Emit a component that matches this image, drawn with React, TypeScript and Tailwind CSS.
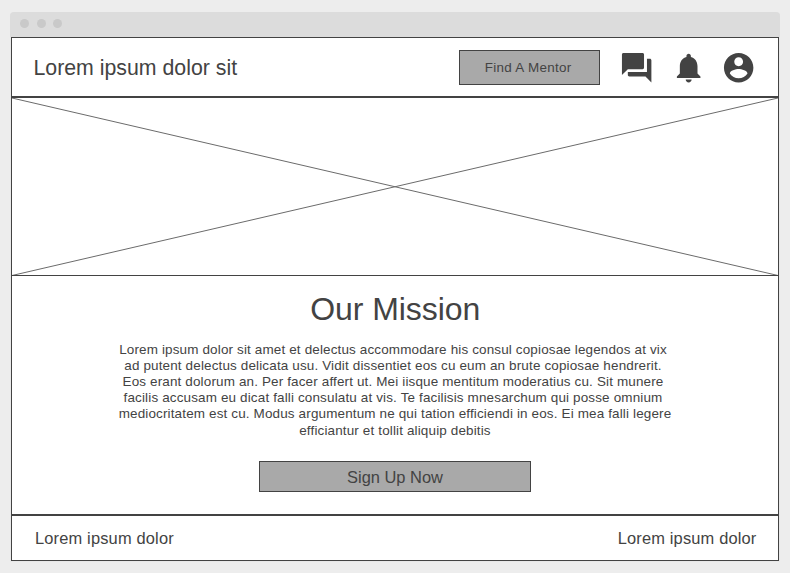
const ICON = "size-[35.330px] fill-[#434343] shrink-0";

function ChatIcon() {
  return (
    <svg className={ICON} viewBox="0 0 24 24">
      <path d="M21 6h-2v9H6v2c0 .55.45 1 1 1h11l4 4V7c0-.55-.45-1-1-1zm-4 6V3c0-.55-.45-1-1-1H3c-.55 0-1 .45-1 1v14l4-4h10c.55 0 1-.45 1-1z" />
    </svg>
  );
}

function BellIcon() {
  return (
    <svg className={ICON} viewBox="0 0 24 24">
      <path d="M12 22c1.100 0 2-.9 2-2h-4c0 1.100.89 2 2 2zm6-6v-5c0-3.070-1.640-5.640-4.500-6.320V4c0-.83-.67-1.500-1.500-1.500s-1.500.67-1.500 1.500v.68C7.630 5.360 6 7.920 6 11v5l-2 2v1h16v-1l-2-2z" />
    </svg>
  );
}

function AccountIcon() {
  return (
    <svg className={ICON} viewBox="0 0 24 24">
      <path d="M12 2C6.480 2 2 6.480 2 12s4.480 10 10 10 10-4.480 10-10S17.520 2 12 2zm0 3c1.660 0 3 1.340 3 3s-1.340 3-3 3-3-1.340-3-3 1.340-3 3-3zm0 14.200c-2.500 0-4.710-1.280-6-3.220.03-1.990 4-3.080 6-3.080 1.990 0 5.970 1.090 6 3.080-1.290 1.940-3.500 3.220-6 3.220z" />
    </svg>
  );
}

const mission = [
  "Lorem ipsum dolor sit amet et delectus accommodare his consul copiosae legendos at vix",
  "ad putent delectus delicata usu. Vidit dissentiet eos cu eum an brute copiosae hendrerit.",
  "Eos erant dolorum an. Per facer affert ut. Mei iisque mentitum moderatius cu. Sit munere",
  "facilis accusam eu dicat falli consulatu at vis. Te facilisis mnesarchum qui posse omnium",
  "mediocritatem est cu. Modus argumentum ne qui tation efficiendi in eos. Ei mea falli legere",
  "efficiantur et tollit aliquip debitis",
];

export default function App() {
  return (
    <div className="h-[573px] w-[790px] overflow-hidden bg-[#ededed] px-[10px] pt-[12px] font-['Liberation_Sans',Arial,sans-serif] text-[#434343]">
      <div className="h-[550px] rounded-t-[4px] bg-[#e8e8e8]">
        <div className="flex h-[25px] items-start gap-[7.500px] rounded-t-[4px] bg-[#dcdcdc] pl-[10px] pt-[7px]">
          <span className="size-[9px] rounded-full bg-[#c9c9c9]" />
          <span className="size-[9px] rounded-full bg-[#c9c9c9]" />
          <span className="size-[9px] rounded-full bg-[#c9c9c9]" />
        </div>
        <main className="mx-[1px] flex h-[524px] flex-col border border-[#434343] bg-white">
          <header className="flex h-[60px] shrink-0 items-center border-b-2 border-[#434343] pl-[21.500px] pr-[21.600px] pt-[1px]">
            <h1 className="pt-[1px] text-[21.300px] leading-[24px]">Lorem ipsum dolor sit</h1>
            <button className="ml-auto h-[35px] w-[141px] border border-[#434343] bg-[#a9a9a9] pr-[3px] pt-[1px] text-[13.450px] tracking-[0.300px]">
              Find A Mentor
            </button>
            <div className="ml-[19px] flex">
              <ChatIcon />
              <div className="ml-[16.700px] flex"><BellIcon /></div>
              <div className="ml-[14.600px] flex"><AccountIcon /></div>
            </div>
          </header>
          <div className="h-[178px] shrink-0 border-b border-[#434343]">
            <svg className="block" width="766" height="177" viewBox="0 0 766 177">
              <path d="M0 0L766 177.500M0 177.500L766 0" fill="none" stroke="#6b6b6b" />
            </svg>
          </div>
          <section className="flex h-[240px] shrink-0 flex-col items-center border-b-2 border-[#434343] pt-[15px] text-center">
            <h2 className="pl-[0.500px] text-[32px] leading-[37px] tracking-[-0.060px]">Our Mission</h2>
            <div className="mt-[14px] h-[97px] text-[13.480px] leading-[16px] tracking-[0.144px]">
              {mission.map((line, i) => (
                <p key={line} className={i < 4 ? "whitespace-nowrap pr-[4px]" : i === 5 ? "whitespace-nowrap pt-[1px]" : "whitespace-nowrap"}>
                  {line}
                </p>
              ))}
            </div>
            <button className="mt-[22px] h-[31px] w-[272px] border border-[#434343] bg-[#a9a9a9] pt-[2px] text-[16.450px]">
              Sign Up Now
            </button>
          </section>
          <footer className="flex grow items-center justify-between pl-[23px] pr-[21.500px] pt-[1px] text-[16.450px] tracking-[0.160px]">
            <span>Lorem ipsum dolor</span>
            <span>Lorem ipsum dolor</span>
          </footer>
        </main>
      </div>
    </div>
  );
}
